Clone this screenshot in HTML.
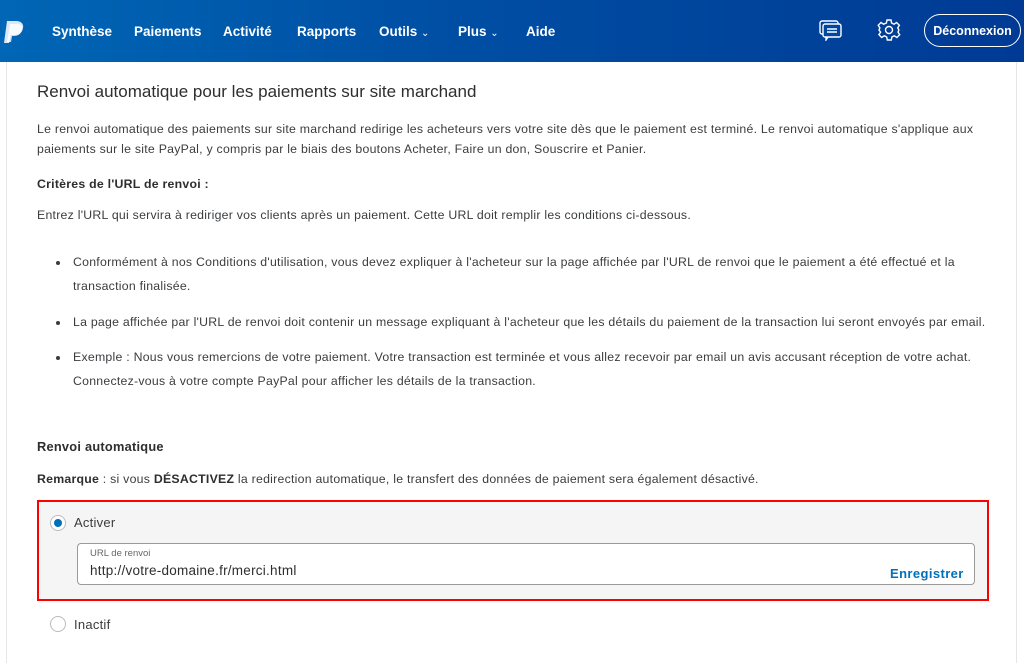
<!DOCTYPE html>
<html><head><meta charset="utf-8"><style>
*{margin:0;padding:0;box-sizing:border-box}
body{width:1024px;height:663px;overflow:hidden;background:#fff;font-family:"Liberation Sans",sans-serif;color:#2c2e2f;position:relative}
.hdr{position:absolute;left:0;top:0;width:1024px;height:62px;background:linear-gradient(90deg,#0066b5 0%,#0050a5 40%,#003a94 100%)}
.nav{position:absolute;top:24px;color:#fff;font-size:13.5px;font-weight:bold}
.t{position:absolute;white-space:nowrap;font-size:12.3px;color:#3a3c3e;letter-spacing:0.25px}
.b{font-weight:bold;color:#2c2e2f}
.dot{position:absolute;width:4px;height:4px;border-radius:50%;background:#3a3c3e}
</style></head><body>
<div class="hdr">
<svg style="position:absolute;left:3px;top:20px" width="22" height="24" viewBox="0 0 22 24"><path d="M4 1h9c5 0 8 3 7 7-1 5-4 7-9 7H8l-2 8H1z" fill="#dbe8f7"/><path d="M7 4h7c4 0 6 2 5 6-1 4-4 6-8 6H9l-1 6H4z" fill="#fff" opacity=".8"/></svg>
<div class="nav" style="left:52px">Synthèse</div>
<div class="nav" style="left:134px">Paiements</div>
<div class="nav" style="left:223px">Activité</div>
<div class="nav" style="left:297px">Rapports</div>
<div class="nav" style="left:379px">Outils <span style="font-weight:normal;font-size:10px">&#8964;</span></div>
<div class="nav" style="left:458px">Plus <span style="font-weight:normal;font-size:10px">&#8964;</span></div>
<div class="nav" style="left:526px">Aide</div>
<svg style="position:absolute;left:818px;top:19px" width="26" height="22" viewBox="0 0 26 22" fill="none" stroke="#fff" stroke-width="1.4"><rect x="2" y="2" width="18" height="13" rx="2"/><rect x="5" y="5" width="18" height="13" rx="2" fill="#0047a0"/><path d="M9 10h10M9 13h10"/><path d="M10 18l-2 3v-3"/></svg>
<svg style="position:absolute;left:877px;top:18px" width="24" height="24" viewBox="0 0 24 24" fill="none" stroke="#fff" stroke-width="1.4"><circle cx="12" cy="12" r="3.5"/><path d="M10 2h4l.6 3 2.4 1.2 2.6-1.7 2.8 2.8-1.7 2.6L21.9 12l-.9 2.1 1.7 2.6-2.8 2.8-2.6-1.7-2.4 1.2-.6 3h-4l-.6-3-2.4-1.2-2.6 1.7-2.8-2.8 1.7-2.6L2 12l.9-2.1-1.7-2.6 2.8-2.8 2.6 1.7L9.4 5z"/></svg>
<div style="position:absolute;left:924px;top:14px;width:97px;height:33px;border:1.5px solid #fff;border-radius:17px;color:#fff;font-size:12.5px;font-weight:bold;display:flex;align-items:center;justify-content:center">Déconnexion</div>
</div>
<div style="position:absolute;left:6px;top:62px;width:1px;height:601px;background:#e6e6e6"></div>
<div style="position:absolute;left:1016px;top:62px;width:1px;height:601px;background:#e6e6e6"></div>
<div class="t" style="left:37px;top:82px;font-size:17px;color:#2c2e2f;letter-spacing:0">Renvoi automatique pour les paiements sur site marchand</div>
<div class="t" style="left:37px;top:122px">Le renvoi automatique des paiements sur site marchand redirige les acheteurs vers votre site dès que le paiement est terminé. Le renvoi automatique s'applique aux</div>
<div class="t" style="left:37px;top:142px">paiements sur le site PayPal, y compris par le biais des boutons Acheter, Faire un don, Souscrire et Panier.</div>
<div class="t b" style="left:37px;top:177px">Critères de l'URL de renvoi :</div>
<div class="t" style="left:37px;top:208px">Entrez l'URL qui servira à rediriger vos clients après un paiement. Cette URL doit remplir les conditions ci-dessous.</div>
<div class="dot" style="left:56px;top:261px"></div>
<div class="t" style="left:73px;top:255px">Conformément à nos Conditions d'utilisation, vous devez expliquer à l'acheteur sur la page affichée par l'URL de renvoi que le paiement a été effectué et la</div>
<div class="t" style="left:73px;top:279px">transaction finalisée.</div>
<div class="dot" style="left:56px;top:321px"></div>
<div class="t" style="left:73px;top:315px">La page affichée par l'URL de renvoi doit contenir un message expliquant à l'acheteur que les détails du paiement de la transaction lui seront envoyés par email.</div>
<div class="dot" style="left:56px;top:356px"></div>
<div class="t" style="left:73px;top:350px">Exemple : Nous vous remercions de votre paiement. Votre transaction est terminée et vous allez recevoir par email un avis accusant réception de votre achat.</div>
<div class="t" style="left:73px;top:374px">Connectez-vous à votre compte PayPal pour afficher les détails de la transaction.</div>
<div class="t b" style="left:37px;top:439px;font-size:12.8px">Renvoi automatique</div>
<div class="t" style="left:37px;top:472px"><b style="color:#2c2e2f">Remarque</b> : si vous <b style="color:#2c2e2f">DÉSACTIVEZ</b> la redirection automatique, le transfert des données de paiement sera également désactivé.</div>
<div style="position:absolute;left:37px;top:500px;width:952px;height:101px;border:2px solid #f00;background:#f5f5f5"></div>
<div style="position:absolute;left:50px;top:515px;width:16px;height:16px;border-radius:50%;border:1px solid #bbb;background:#fff"><div style="position:absolute;left:3px;top:3px;width:8px;height:8px;border-radius:50%;background:#0070ba"></div></div>
<div class="t" style="left:74px;top:515px;font-size:13px">Activer</div>
<div style="position:absolute;left:77px;top:543px;width:898px;height:42px;border:1px solid #9a9a9a;border-radius:4px;background:#fff"></div>
<div class="t" style="left:90px;top:548px;font-size:9.5px;color:#666;letter-spacing:0">URL de renvoi</div>
<div class="t" style="left:90px;top:563px;font-size:13.5px;color:#2c2e2f">http://votre-domaine.fr/merci.html</div>
<div class="t" style="left:890px;top:566px;font-size:13px;font-weight:bold;color:#0070ba;letter-spacing:0.4px">Enregistrer</div>
<div style="position:absolute;left:50px;top:616px;width:16px;height:16px;border-radius:50%;border:1px solid #bbb;background:#fff"></div>
<div class="t" style="left:74px;top:617px;font-size:13px">Inactif</div>
</body></html>
